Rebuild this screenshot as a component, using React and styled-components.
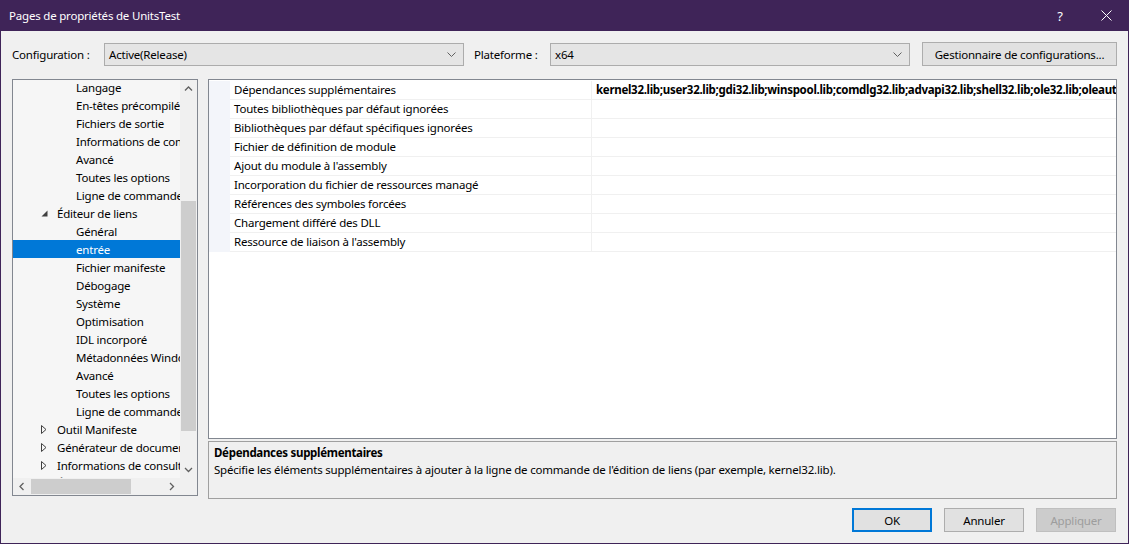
import styled, { createGlobalStyle } from "styled-components";

const GlobalStyle = createGlobalStyle`
  html, body {
    margin: 0;
    padding: 0;
    background: #f0f0f0;
  }
  * {
    box-sizing: border-box;
  }
`;

const Window = styled.div`
  width: 1129px;
  height: 544px;
  display: flex;
  flex-direction: column;
  background: #f0f0f0;
  border: 1px solid #3f2458;
  border-top: none;
  font-family: "Noto Sans", "Open Sans", sans-serif;
  font-size: 11.5px;
  letter-spacing: -0.2px;
  color: #000;
  overflow: hidden;
`;

const TitleBar = styled.div`
  height: 31px;
  flex: none;
  display: flex;
  align-items: center;
  background: #3f2458;
  color: #fff;
  margin: 0 -1px;
  padding-left: 9px;
`;

const Title = styled.div`
  flex: 1;
  font-size: 11.5px;
`;

const TitleButton = styled.div`
  width: 46px;
  height: 31px;
  display: flex;
  align-items: center;
  justify-content: center;
  font-size: 13px;
  color: #fff;
`;

const Body = styled.div`
  flex: 1;
  display: flex;
  flex-direction: column;
  padding: 11px 11px 0 11px;
`;

const ConfigRow = styled.div`
  display: flex;
  align-items: center;
  height: 24px;
`;

const Label = styled.span`
  width: ${(p) => p.$w}px;
  flex: none;
  white-space: nowrap;
`;

const Select = styled.div`
  width: ${(p) => p.$w}px;
  height: 23px;
  flex: none;
  display: flex;
  align-items: center;
  justify-content: space-between;
  background: #e5e5e5;
  border: 1px solid #acacac;
  padding: 0 7px 0 4px;
  margin-right: ${(p) => p.$mr || 0}px;
`;

const Button = styled.div`
  width: ${(p) => p.$w || 80}px;
  height: 24px;
  flex: none;
  display: flex;
  align-items: center;
  justify-content: center;
  background: ${(p) => (p.$disabled ? "#cccccc" : "#e1e1e1")};
  color: ${(p) => (p.$disabled ? "#9d9d9d" : "#000")};
  border: ${(p) => (p.$default ? "2px solid #0078d7" : p.$disabled ? "1px solid #bfbfbf" : "1px solid #adadad")};
  white-space: nowrap;
`;

const Main = styled.div`
  display: flex;
  gap: 10px;
  margin-top: 13px;
`;

const TreePanel = styled.div`
  width: 186px;
  height: 417px;
  flex: none;
  border: 1px solid #828790;
  display: grid;
  grid-template-columns: 1fr 17px;
  grid-template-rows: 1fr 17px;
  background: #f0f0f0;
`;

const TreeView = styled.div`
  overflow: hidden;
  background: #f6f6f6;
`;

const TreeList = styled.div`
  margin-top: -2px;
`;

const TreeRow = styled.div`
  height: 18px;
  display: flex;
  align-items: center;
  white-space: nowrap;
  padding-left: ${(p) => (p.$level === 2 ? 28 : 63)}px;
  background: ${(p) => (p.$selected ? "#0078d7" : "transparent")};
  color: ${(p) => (p.$selected ? "#fff" : "#000")};
`;

const Expander = styled.span`
  width: 16px;
  flex: none;
  display: flex;
  align-items: center;
`;

const VScroll = styled.div`
  display: flex;
  flex-direction: column;
  background: #f0f0f0;
`;

const HScroll = styled.div`
  display: flex;
  background: #f0f0f0;
`;

const Arrow = styled.div`
  width: 17px;
  height: 17px;
  flex: none;
  display: flex;
  align-items: center;
  justify-content: center;
`;

const Track = styled.div`
  flex: 1;
  position: relative;
`;

const Thumb = styled.div`
  position: absolute;
  background: #cdcdcd;
`;

const RightCol = styled.div`
  flex: 1;
  display: flex;
  flex-direction: column;
  gap: 2px;
`;

const Grid = styled.div`
  height: 360px;
  border: 1px solid #828790;
  background: #fff;
  padding-top: 1px;
  overflow: hidden;
`;

const GridRow = styled.div`
  display: grid;
  grid-template-columns: 21px 362px 1fr;
  height: 19px;
`;

const Gutter = styled.div`
  background: #f3f5fa;
`;

const Cell = styled.div`
  display: flex;
  align-items: center;
  padding-left: 4px;
  padding-bottom: 1px;
  white-space: nowrap;
  overflow: hidden;
  border-bottom: 1px solid #f0f0f0;
  border-right: ${(p) => (p.$name ? "1px solid #f0f0f0" : "none")};
  font-weight: ${(p) => (p.$bold ? 700 : 400)};
  letter-spacing: ${(p) => (p.$bold ? "-0.3px" : "-0.2px")};
`;

const Description = styled.div`
  height: 58px;
  border: 1px solid #a0a0a0;
  padding: 2px 5px;
  line-height: 17px;
`;

const DescTitle = styled.div`
  font-weight: 700;
  letter-spacing: -0.3px;
`;

const Footer = styled.div`
  display: flex;
  justify-content: flex-end;
  gap: 12px;
  margin-top: 9px;
  padding-right: 1px;
`;

const Chevron = ({ dir }) => {
  const paths = {
    down: "M1 1 L4.5 4.5 L8 1",
    up: "M1 4.5 L4.5 1 L8 4.5",
    left: "M4.5 1 L1 4.5 L4.5 8",
    right: "M1 1 L4.5 4.5 L1 8",
  };
  const horiz = dir === "down" || dir === "up";
  return (
    <svg width={horiz ? 9 : 6} height={horiz ? 6 : 9} viewBox={horiz ? "0 0 9 6" : "0 0 6 9"}>
      <path d={paths[dir]} fill="none" stroke="#606060" strokeWidth="1.3" />
    </svg>
  );
};

const SelectChevron = () => (
  <svg width="9" height="5" viewBox="0 0 9 5">
    <path d="M0.5 0.5 L4.5 4.5 L8.5 0.5" fill="none" stroke="#606060" strokeWidth="1" />
  </svg>
);

const tree = [
  { t: "Langage", l: 3 },
  { t: "En-têtes précompilés", l: 3 },
  { t: "Fichiers de sortie", l: 3 },
  { t: "Informations de construction", l: 3 },
  { t: "Avancé", l: 3 },
  { t: "Toutes les options", l: 3 },
  { t: "Ligne de commande", l: 3 },
  { t: "Éditeur de liens", l: 2, open: true },
  { t: "Général", l: 3 },
  { t: "entrée", l: 3, sel: true },
  { t: "Fichier manifeste", l: 3 },
  { t: "Débogage", l: 3 },
  { t: "Système", l: 3 },
  { t: "Optimisation", l: 3 },
  { t: "IDL incorporé", l: 3 },
  { t: "Métadonnées Windows", l: 3 },
  { t: "Avancé", l: 3 },
  { t: "Toutes les options", l: 3 },
  { t: "Ligne de commande", l: 3 },
  { t: "Outil Manifeste", l: 2 },
  { t: "Générateur de documents XML", l: 2 },
  { t: "Informations de consultation", l: 2 },
  { t: "Événements de build", l: 2 },
];

const props = [
  ["Dépendances supplémentaires", "kernel32.lib;user32.lib;gdi32.lib;winspool.lib;comdlg32.lib;advapi32.lib;shell32.lib;ole32.lib;oleaut32.lib;uuid.lib;odbc32.lib;odbccp32.lib;%(AdditionalDependencies)"],
  ["Toutes bibliothèques par défaut ignorées", ""],
  ["Bibliothèques par défaut spécifiques ignorées", ""],
  ["Fichier de définition de module", ""],
  ["Ajout du module à l'assembly", ""],
  ["Incorporation du fichier de ressources managé", ""],
  ["Références des symboles forcées", ""],
  ["Chargement différé des DLL", ""],
  ["Ressource de liaison à l'assembly", ""],
];

export default function App() {
  return (
    <>
      <GlobalStyle />
      <Window>
        <TitleBar>
          <Title>Pages de propriétés de UnitsTest</Title>
          <TitleButton>?</TitleButton>
          <TitleButton>
            <svg width="11" height="11" viewBox="0 0 11 11">
              <path d="M0.5 0.5 L10.5 10.5 M10.5 0.5 L0.5 10.5" stroke="#fff" strokeWidth="1" />
            </svg>
          </TitleButton>
        </TitleBar>
        <Body>
          <ConfigRow>
            <Label $w={92}>Configuration :</Label>
            <Select $w={360} $mr={10}>
              <span>Active(Release)</span>
              <SelectChevron />
            </Select>
            <Label $w={76}>Plateforme :</Label>
            <Select $w={360} $mr={12}>
              <span>x64</span>
              <SelectChevron />
            </Select>
            <Button $w={195}>Gestionnaire de configurations...</Button>
          </ConfigRow>
          <Main>
            <TreePanel>
              <TreeView>
                <TreeList>
                  {tree.map((n, i) => (
                    <TreeRow key={i} $level={n.l} $selected={n.sel}>
                      {n.l === 2 && (
                        <Expander>
                          {n.open ? (
                            <svg width="7" height="7" viewBox="0 0 7 7">
                              <path d="M6.5 0.5 L6.5 6.5 L0.5 6.5 Z" fill="#404040" />
                            </svg>
                          ) : (
                            <svg width="6" height="9" viewBox="0 0 6 9">
                              <path d="M0.5 0.5 L5 4.5 L0.5 8.5 Z" fill="none" stroke="#404040" strokeWidth="1" />
                            </svg>
                          )}
                        </Expander>
                      )}
                      {n.t}
                    </TreeRow>
                  ))}
                </TreeList>
              </TreeView>
              <VScroll>
                <Arrow>
                  <Chevron dir="up" />
                </Arrow>
                <Track>
                  <Thumb style={{ left: 1, right: 1, top: 104, height: 230 }} />
                </Track>
                <Arrow>
                  <Chevron dir="down" />
                </Arrow>
              </VScroll>
              <HScroll>
                <Arrow>
                  <Chevron dir="left" />
                </Arrow>
                <Track>
                  <Thumb style={{ top: 1, bottom: 1, left: 1, width: 100 }} />
                </Track>
                <Arrow>
                  <Chevron dir="right" />
                </Arrow>
              </HScroll>
              <div />
            </TreePanel>
            <RightCol>
              <Grid>
                {props.map(([name, value], i) => (
                  <GridRow key={i}>
                    <Gutter />
                    <Cell $name>{name}</Cell>
                    <Cell $bold>{value}</Cell>
                  </GridRow>
                ))}
              </Grid>
              <Description>
                <DescTitle>Dépendances supplémentaires</DescTitle>
                <div>
                  Spécifie les éléments supplémentaires à ajouter à la ligne de commande de l'édition de liens (par exemple, kernel32.lib).
                </div>
              </Description>
            </RightCol>
          </Main>
          <Footer>
            <Button $default>OK</Button>
            <Button>Annuler</Button>
            <Button $disabled>Appliquer</Button>
          </Footer>
        </Body>
      </Window>
    </>
  );
}
